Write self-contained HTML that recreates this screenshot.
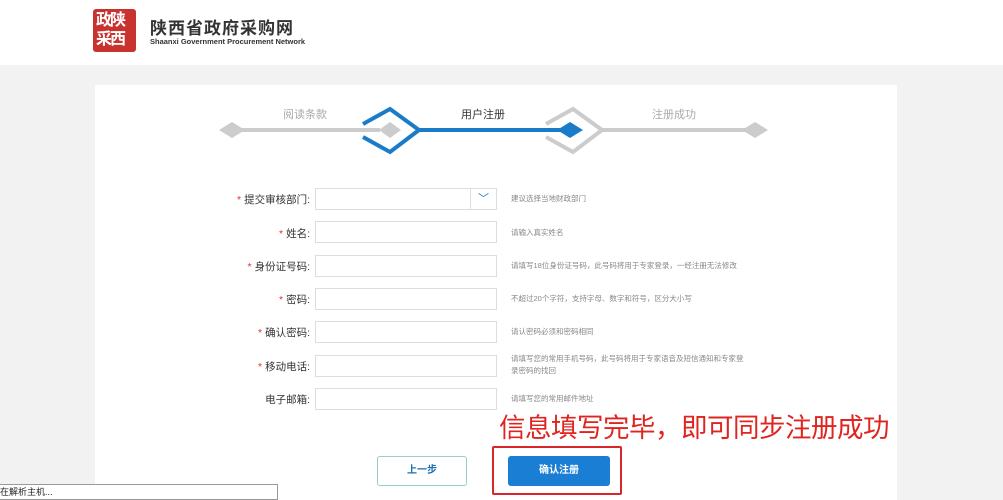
<!DOCTYPE html>
<html><head><meta charset="utf-8"><style>
*{margin:0;padding:0;box-sizing:border-box}
body{width:1003px;height:500px;overflow:hidden;background:#f2f2f2;font-family:"Liberation Sans","Noto Sans CJK SC",sans-serif;position:relative}
.hdr{position:absolute;left:0;top:0;width:1003px;height:65px;background:#fff}
.card{position:absolute;left:95px;top:85px;width:802px;height:415px;background:#fff}
.a{position:absolute;white-space:nowrap}
.lbl{position:absolute;width:120px;left:190px;text-align:right;font-size:10.5px;color:#333}
.lbl b{color:#d33;font-weight:normal;margin-right:3px}
.inp{position:absolute;left:315px;width:182px;height:22px;border:1px solid #ddd;background:#fff}
.hint{position:absolute;left:511px;font-size:7.5px;color:#888;line-height:12px}
</style></head><body>
<div class="hdr">
 <div class="a" style="left:93px;top:9px;width:43px;height:43px;background:#c8332f;border-radius:3px"></div>
 <div class="a" style="left:96px;top:11px;font-size:16px;line-height:19px;color:#fff;font-weight:bold;letter-spacing:-2px;width:40px">政陕<br>采西</div>
 <div class="a" style="left:150px;top:14px;font-size:17px;font-weight:bold;color:#333;letter-spacing:1px">陕西省政府采购网</div>
 <div class="a" style="left:150px;top:37px;font-size:7.5px;font-weight:bold;color:#333">Shaanxi Government Procurement Network</div>
</div>
<div class="card"></div>
<svg class="a" style="left:0;top:0" width="1003" height="500">
 <line x1="232" y1="130" x2="380" y2="130" stroke="#ccc" stroke-width="4"/>
 <line x1="600" y1="130" x2="755" y2="130" stroke="#ccc" stroke-width="4"/>
 <line x1="420" y1="130" x2="570" y2="130" stroke="#1a7cc9" stroke-width="4"/>
 <polygon points="232,122 245,130 232,138 219,130" fill="#ccc"/>
 <polygon points="755,122 768,130 755,138 742,130" fill="#ccc"/>
 <polyline points="363,124 390,109 419,130 390,152 363,137" fill="none" stroke="#1a7cc9" stroke-width="4"/>
 <polygon points="390,122 401,130 390,138 379,130" fill="#ccc"/>
 <polyline points="546,124 573,109 602,130 573,152 546,137" fill="none" stroke="#ccc" stroke-width="4"/>
 <polygon points="570,122 583,130 570,138 557,130" fill="#1a7cc9"/>
</svg>
<div class="a" style="left:283px;top:106px;font-size:11px;color:#aaa">阅读条款</div>
<div class="a" style="left:461px;top:106px;font-size:11px;color:#333">用户注册</div>
<div class="a" style="left:652px;top:106px;font-size:11px;color:#aaa">注册成功</div>

<div class="lbl" style="top:192px"><b>*</b>提交审核部门:</div>
<div class="inp" style="top:188px"></div>
<div class="a" style="left:470px;top:188px;width:27px;height:22px;border:1px solid #ddd;color:#1a7cc9;font-size:11px;text-align:center;line-height:20px">﹀</div>
<div class="hint" style="top:193px">建议选择当地财政部门</div>

<div class="lbl" style="top:226px"><b>*</b>姓名:</div>
<div class="inp" style="top:221px"></div>
<div class="hint" style="top:227px">请输入真实姓名</div>

<div class="lbl" style="top:259px"><b>*</b>身份证号码:</div>
<div class="inp" style="top:255px"></div>
<div class="hint" style="top:260px">请填写18位身份证号码，此号码将用于专家登录，一经注册无法修改</div>

<div class="lbl" style="top:292px"><b>*</b>密码:</div>
<div class="inp" style="top:288px"></div>
<div class="hint" style="top:293px">不超过20个字符，支持字母、数字和符号，区分大小写</div>

<div class="lbl" style="top:325px"><b>*</b>确认密码:</div>
<div class="inp" style="top:321px"></div>
<div class="hint" style="top:326px">请认密码必须和密码相同</div>

<div class="lbl" style="top:359px"><b>*</b>移动电话:</div>
<div class="inp" style="top:355px"></div>
<div class="hint" style="top:353px">请填写您的常用手机号码，此号码将用于专家语音及短信通知和专家登<br>录密码的找回</div>

<div class="lbl" style="top:392px">电子邮箱:</div>
<div class="inp" style="top:388px"></div>
<div class="hint" style="top:393px">请填写您的常用邮件地址</div>

<div class="a" style="left:499px;top:406px;font-size:26.5px;color:#e0241f;letter-spacing:-0.5px">信息填写完毕，即可同步注册成功</div>
<div class="a" style="left:377px;top:456px;width:90px;height:30px;border:1px solid #9cc;border-radius:3px;background:#fff;font-size:10px;color:#1a6fb0;text-align:center;line-height:28px;font-weight:bold">上一步</div>
<div class="a" style="left:492px;top:446px;width:130px;height:49px;border:2px solid #d9262a;border-radius:2px"></div>
<div class="a" style="left:508px;top:456px;width:102px;height:30px;background:#1a7fd4;border-radius:3px;font-size:10px;color:#fff;text-align:center;line-height:30px;font-weight:bold">确认注册</div>
<div class="a" style="left:0;top:484px;width:278px;height:16px;background:#fff;border:1px solid #999;border-left:none;font-size:9px;color:#222;line-height:14px">在解析主机...</div>
</body></html>
